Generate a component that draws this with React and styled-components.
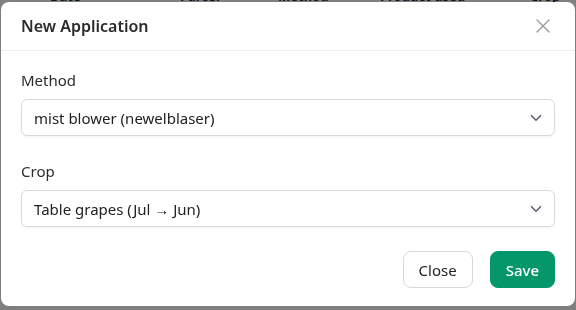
import React from "react";
import styled, { createGlobalStyle } from "styled-components";
import { ChevronDown, X } from "lucide-react";

const GlobalStyle = createGlobalStyle`
  * { box-sizing: border-box; }
  html, body { margin: 0; padding: 0; }
  body {
    font-family: "Noto Sans", "Open Sans", sans-serif;
    background: #ffffff;
    color: #222;
  }
`;

const App = () => {
  return (
    <>
      <GlobalStyle />
      <Page>
        <TableHead>
          <span>Date</span>
          <span>Parcel</span>
          <span>Method</span>
          <span>Product used</span>
          <span>Crop</span>
        </TableHead>
      </Page>
      <Overlay>
        <Modal>
          <Header>
            <Title>New Application</Title>
            <CloseIcon aria-label="close">
              <X size={24} strokeWidth={1.4} />
            </CloseIcon>
          </Header>
          <Body>
            <Field>
              <Label>Method</Label>
              <Select>
                <span>mist blower (newelblaser)</span>
                <ChevronDown size={18} strokeWidth={2.2} />
              </Select>
            </Field>
            <Field>
              <Label>Crop</Label>
              <Select>
                <span>Table grapes (Jul → Jun)</span>
                <ChevronDown size={18} strokeWidth={2.2} />
              </Select>
            </Field>
            <Footer>
              <Button>Close</Button>
              <Button primary>Save</Button>
            </Footer>
          </Body>
        </Modal>
      </Overlay>
    </>
  );
};

const Page = styled.div`
  width: 576px;
  height: 310px;
  overflow: hidden;
`;

const TableHead = styled.div`
  display: grid;
  grid-template-columns: 130px 98px 102px 150px 1fr;
  padding-left: 50px;
  margin-top: -13px;
  font-size: 13px;
  font-weight: 700;
  color: #1f2937;
`;

const Overlay = styled.div`
  position: fixed;
  inset: 0;
  background: rgba(0, 0, 0, 0.5);
  display: flex;
  align-items: flex-start;
  justify-content: flex-start;
  padding: 2px 0 0 1px;
`;

const Modal = styled.div`
  width: 574px;
  background: #ffffff;
  border-radius: 8px;
  overflow: hidden;
`;

const Header = styled.div`
  height: 49px;
  padding: 0 20px;
  display: flex;
  align-items: center;
  justify-content: space-between;
  border-bottom: 1px solid #ececec;
`;

const Title = styled.h2`
  margin: 0;
  font-size: 16px;
  font-weight: 600;
  color: #2b2b2b;
`;

const CloseIcon = styled.button`
  border: none;
  background: transparent;
  padding: 0;
  display: flex;
  color: #9a9a9a;
  cursor: pointer;
`;

const Body = styled.div`
  padding: 19px 20px 18px;
  display: flex;
  flex-direction: column;
  gap: 25px;
`;

const Field = styled.div`
  display: flex;
  flex-direction: column;
  gap: 9px;
`;

const Label = styled.label`
  font-size: 15px;
  line-height: 20px;
  color: #2b2b2b;
`;

const Select = styled.div`
  height: 37px;
  border: 1px solid #d9d9d9;
  border-radius: 6px;
  padding: 0 9px 0 12px;
  display: flex;
  align-items: center;
  justify-content: space-between;
  font-size: 15px;
  color: #222;
  box-shadow: 0 1px 2px rgba(0, 0, 0, 0.05);

  svg {
    color: #5f6675;
  }
`;

const Footer = styled.div`
  display: flex;
  justify-content: flex-end;
  gap: 17px;
  margin-top: -1px;
`;

const Button = styled.button`
  height: 37px;
  padding: 0 15px;
  border-radius: 8px;
  font-family: "Noto Sans", "Open Sans", sans-serif;
  font-size: 15px;
  cursor: pointer;
  border: 1px solid ${(p) => (p.primary ? "#059669" : "#d9d9d9")};
  background: ${(p) => (p.primary ? "#059669" : "#ffffff")};
  color: ${(p) => (p.primary ? "#ffffff" : "#222")};
  font-weight: ${(p) => (p.primary ? 500 : 400)};
`;

export default App;
